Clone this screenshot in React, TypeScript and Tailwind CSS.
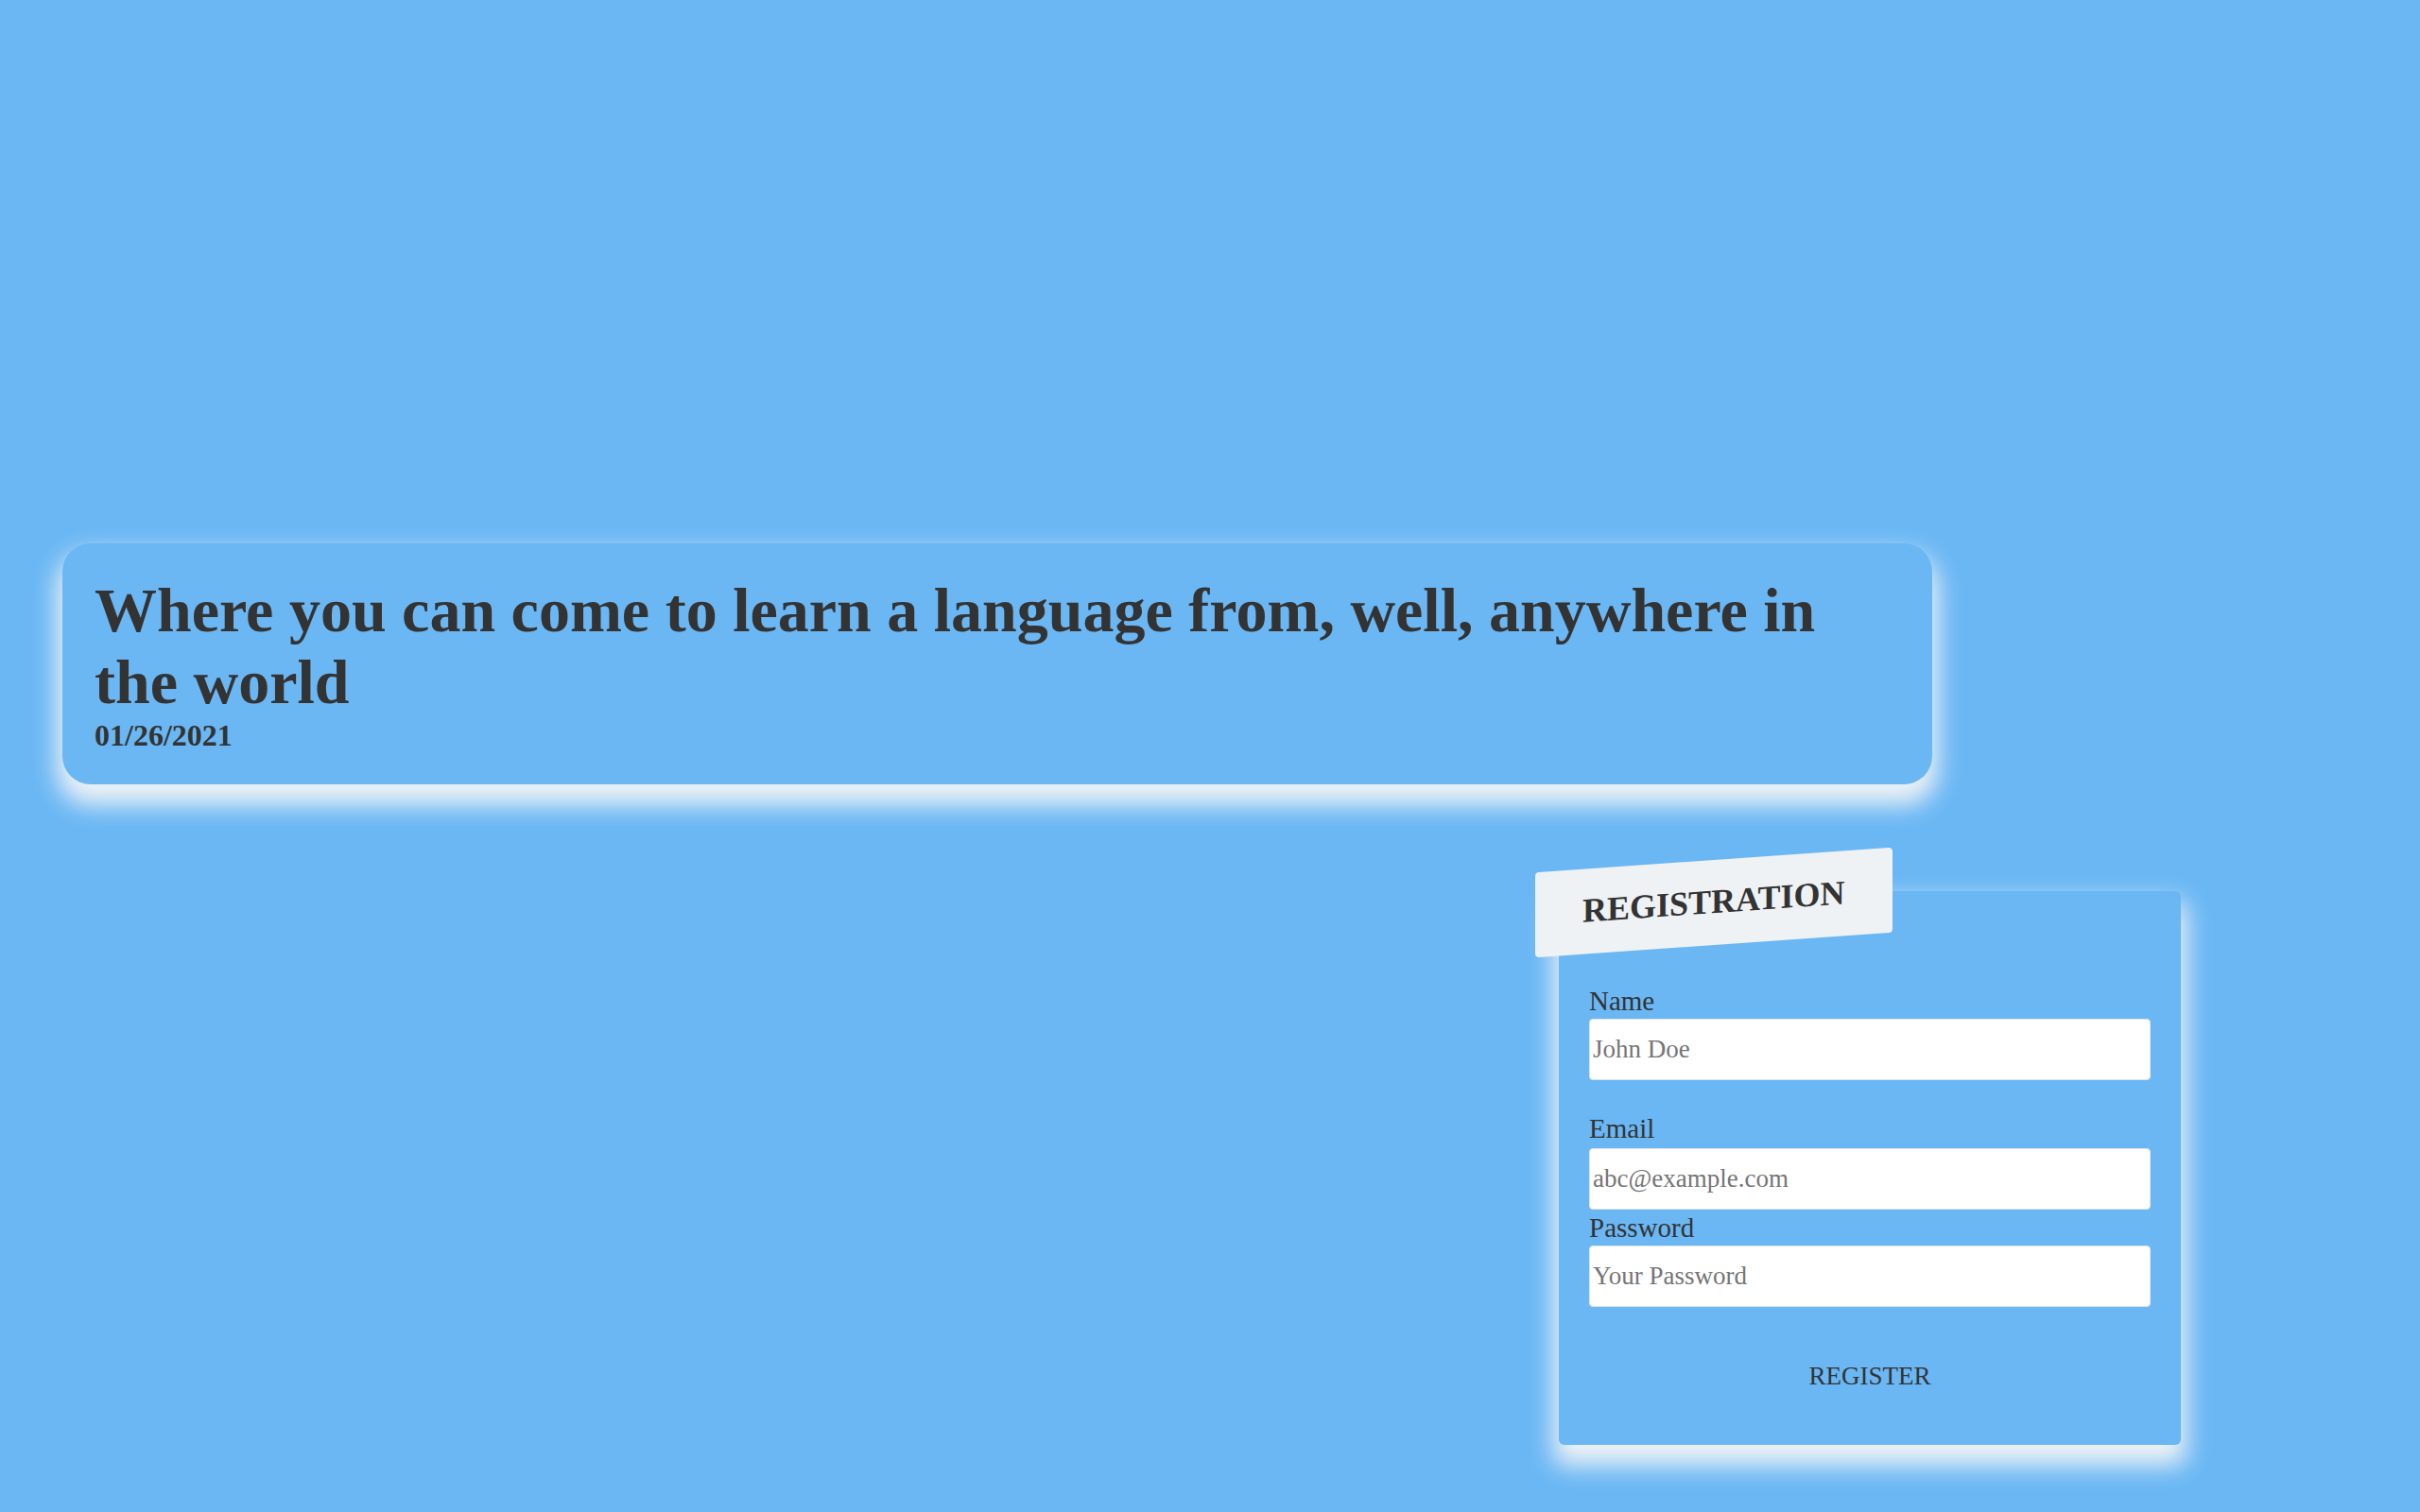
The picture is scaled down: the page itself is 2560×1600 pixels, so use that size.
export default function App() {
  return (
    <div className="min-h-screen w-full bg-[#6ab7f4] font-['Liberation_Serif',serif] text-[#333333] flex flex-col pt-[575px] pb-[71px]">
      <header className="ml-[66px] w-[1978px] h-[255px] rounded-[30px] bg-[#6ab7f4] pt-[33px] pl-[34px] pr-[60px] shadow-[0_16px_26px_6px_#eef2f6]">
        <h1 className="text-[66px] font-bold leading-[1.149]">
          Where you can come to learn a language from, well, anywhere in the world
        </h1>
        <p className="text-[32px] font-bold leading-[1.149]">01/26/2021</p>
      </header>

      <section className="relative ml-[1649px] mt-[113px] w-[658px] h-[586px] rounded-md bg-[#6ab7f4] px-[32px] pt-[100px] shadow-[0_16px_26px_6px_#eef2f6]">
        <div className="absolute -left-[25px] -top-[33px] w-[378px] h-[90px] -skew-y-4 rounded-[4px] bg-[#eef2f5] flex items-center pl-[50px]">
          <h2 className="text-[36px] font-bold leading-[1.149]">REGISTRATION</h2>
        </div>

        <form className="flex flex-col">
          <label className="text-[29px] leading-[1.149]" htmlFor="name">Name</label>
          <input
            id="name"
            type="text"
            placeholder="John Doe"
            className="mt-[2px] h-[65px] w-full rounded-[4px] border border-[#dde4ea] bg-white px-[3px] text-[27px] placeholder:text-[#757575] outline-none"
          />

          <label className="mt-[35px] text-[29px] leading-[1.149]" htmlFor="email">Email</label>
          <input
            id="email"
            type="email"
            placeholder="abc@example.com"
            className="mt-[3px] h-[65px] w-full rounded-[4px] border border-[#dde4ea] bg-white px-[3px] text-[27px] placeholder:text-[#757575] outline-none"
          />

          <label className="mt-[3px] text-[29px] leading-[1.149]" htmlFor="password">Password</label>
          <input
            id="password"
            type="password"
            placeholder="Your Password"
            className="mt-[2px] h-[65px] w-full rounded-[4px] border border-[#dde4ea] bg-white px-[3px] text-[27px] placeholder:text-[#757575] outline-none"
          />

          <button type="button" className="mt-[58px] w-full text-center text-[27px] leading-[1.149] text-[#333333]">
            REGISTER
          </button>
        </form>
      </section>
    </div>
  );
}
